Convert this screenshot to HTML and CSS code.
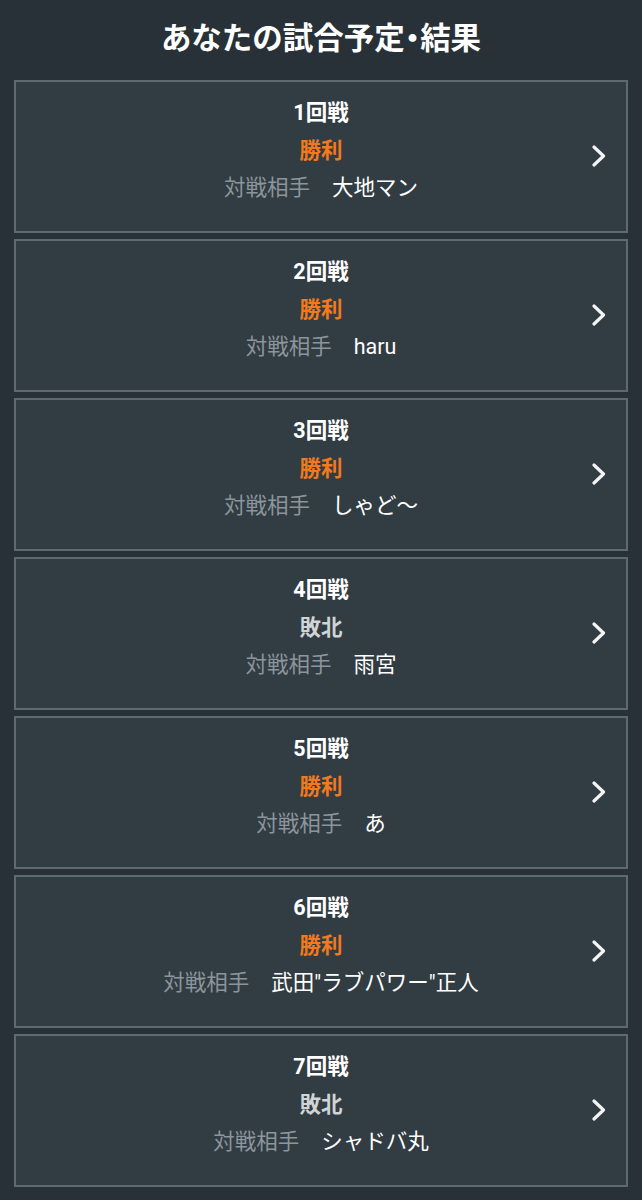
FILE: index.html
```html
<!DOCTYPE html>
<html lang="ja">
<head>
<meta charset="utf-8">
<link rel="stylesheet" href="styles.css">
</head>
<body>
<h1 class="title">あなたの試合予定<span class="dot">・</span>結果</h1>
<div class="list">
  <div class="card"><div class="info"><div class="round">1回戦</div><div class="result win">勝利</div><div class="opp"><span class="label">対戦相手</span><span class="name">大地マン</span></div></div><svg class="chev" viewBox="0 0 14 22"><path d="M2 2 L11.5 11 L2 20"/></svg></div>
  <div class="card"><div class="info"><div class="round">2回戦</div><div class="result win">勝利</div><div class="opp"><span class="label">対戦相手</span><span class="name">haru</span></div></div><svg class="chev" viewBox="0 0 14 22"><path d="M2 2 L11.5 11 L2 20"/></svg></div>
  <div class="card"><div class="info"><div class="round">3回戦</div><div class="result win">勝利</div><div class="opp"><span class="label">対戦相手</span><span class="name">しゃど〜</span></div></div><svg class="chev" viewBox="0 0 14 22"><path d="M2 2 L11.5 11 L2 20"/></svg></div>
  <div class="card"><div class="info"><div class="round">4回戦</div><div class="result lose">敗北</div><div class="opp"><span class="label">対戦相手</span><span class="name">雨宮</span></div></div><svg class="chev" viewBox="0 0 14 22"><path d="M2 2 L11.5 11 L2 20"/></svg></div>
  <div class="card"><div class="info"><div class="round">5回戦</div><div class="result win">勝利</div><div class="opp"><span class="label">対戦相手</span><span class="name">あ</span></div></div><svg class="chev" viewBox="0 0 14 22"><path d="M2 2 L11.5 11 L2 20"/></svg></div>
  <div class="card"><div class="info"><div class="round">6回戦</div><div class="result win">勝利</div><div class="opp"><span class="label">対戦相手</span><span class="name">武田"ラブパワー"正人</span></div></div><svg class="chev" viewBox="0 0 14 22"><path d="M2 2 L11.5 11 L2 20"/></svg></div>
  <div class="card"><div class="info"><div class="round">7回戦</div><div class="result lose">敗北</div><div class="opp"><span class="label">対戦相手</span><span class="name">シャドバ丸</span></div></div><svg class="chev" viewBox="0 0 14 22"><path d="M2 2 L11.5 11 L2 20"/></svg></div>
</div>
</body>
</html>
```
FILE: styles.css
```css
html, body {
  margin: 0;
  padding: 0;
  background: #283137;
}
body {
  font-family: Roboto, "Noto Sans CJK JP", "Noto Sans", sans-serif;
  color: #ffffff;
  width: 642px;
  height: 1200px;
  overflow: hidden;
}
.title {
  margin: 0;
  height: 80px;
  line-height: 78px;
  text-align: center;
  font-size: 30.5px;
  font-weight: 700;
  color: #ffffff;
}
.dot {
  font-feature-settings: "halt" 1;
}
.list {
  display: flex;
  flex-direction: column;
  gap: 6px;
  padding: 0 14px;
}
.card {
  box-sizing: border-box;
  height: 153px;
  border: 2px solid #5e6a71;
  background: #323c43;
  display: flex;
  align-items: center;
  position: relative;
}
.info {
  flex: 1;
  align-self: flex-start;
  padding-top: 12px;
  text-align: center;
  font-size: 21.5px;
  line-height: 37.5px;
}
.round {
  font-weight: 700;
  color: #ffffff;
}
.result {
  font-weight: 700;
}
.win { color: #f27a1c; }
.lose { color: #d0d4d6; }
.label {
  color: #8b959b;
  margin-right: 22px;
}
.name {
  color: #ffffff;
}
.chev {
  position: absolute;
  right: 20px;
  top: 63px;
  width: 14px;
  height: 22px;
  fill: none;
  stroke: #f2f4f5;
  stroke-width: 3.2;
  stroke-linecap: round;
  stroke-linejoin: round;
}
```
